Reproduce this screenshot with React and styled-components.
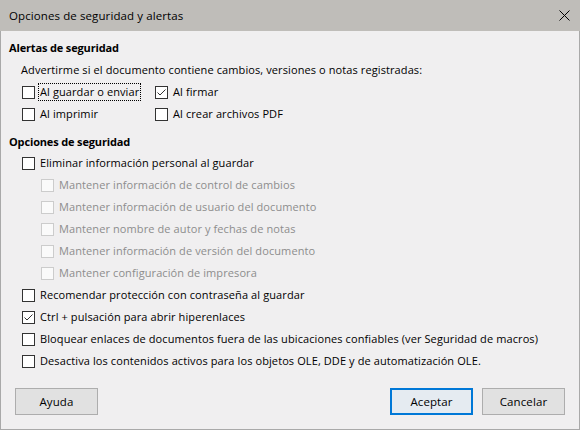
import React from 'react';
import styled, { createGlobalStyle } from 'styled-components';

const Global = createGlobalStyle`
  html, body { margin: 0; padding: 0; background: #f0eff0; }
  body {
    font-family: "Open Sans", "Noto Sans", sans-serif;
    font-size: 11px;
    letter-spacing: 0.1px;
    color: #000;
  }
`;

const Window = styled.div`
  width: 580px;
  height: 430px;
  display: flex;
  flex-direction: column;
  background: #f0eff0;
`;

const TitleBar = styled.div`
  height: 31px;
  flex: none;
  background: #bfbdb9;
  display: flex;
  align-items: center;
  justify-content: space-between;
  padding: 0 9px;
  font-size: 11.5px;
`;

const CloseButton = styled.div`
  width: 30px;
  height: 31px;
  display: flex;
  align-items: center;
  justify-content: center;
  margin-right: -8px;
`;

const Content = styled.div`
  flex: 1;
  display: flex;
  flex-direction: column;
  border: 1px solid #a9a9a9;
  border-top: none;
  padding: 6px 0 0 8px;
`;

const Heading = styled.div`
  height: ${p => p.$h || 22}px;
  line-height: 22px;
  font-weight: 700;
  letter-spacing: -0.15px;
  margin-top: ${p => p.$gap || 0}px;
`;

const Text = styled.div`
  height: 22px;
  line-height: 22px;
  padding-left: 12px;
`;

const Grid = styled.div`
  display: grid;
  grid-template-columns: 133px auto;
  padding-left: 13px;
`;

const Row = styled.div`
  height: 22px;
  display: flex;
  align-items: center;
  gap: 4px;
  padding-left: ${p => p.$indent || 0}px;
  color: ${p => (p.$disabled ? '#8d8d8d' : '#000')};
`;

const List = styled.div`
  padding-left: 13px;
`;

const Box = styled.span`
  width: 13px;
  height: 13px;
  box-sizing: border-box;
  flex: none;
  border: 1px solid ${p => (p.$disabled ? '#cccccc' : '#333333')};
  background: ${p => (p.$disabled ? '#fafafa' : '#ffffff')};
  display: flex;
  align-items: center;
  justify-content: center;
`;

const Label = styled.span`
  line-height: 16px;
  padding: 0 1px;
  outline: ${p => (p.$focus ? '1px dotted #000' : 'none')};
  outline-offset: 0;
`;

const Footer = styled.div`
  margin-top: auto;
  display: flex;
  gap: 9px;
  padding: 0 14px 14px 6px;
`;

const Spacer = styled.div`
  flex: 1;
`;

const Button = styled.div`
  width: 83px;
  height: 27px;
  box-sizing: border-box;
  display: flex;
  align-items: center;
  justify-content: center;
  background: ${p => (p.$default ? '#e5ebf1' : '#e1e1e1')};
  border: ${p => (p.$default ? '2px solid #0078d7' : '1px solid #adadad')};
  font-size: 11.5px;
`;

const Check = ({ checked, disabled }) => (
  <Box $disabled={disabled}>
    {checked && (
      <svg width="11" height="11" viewBox="0 0 11 11">
        <path d="M1.5 5.5 L4 8 L9.5 2.5" fill="none" stroke="#333" strokeWidth="1" />
      </svg>
    )}
  </Box>
);

const Option = ({ label, checked, disabled, indent, focus }) => (
  <Row $disabled={disabled} $indent={indent}>
    <Check checked={checked} disabled={disabled} />
    <Label $focus={focus}>{label}</Label>
  </Row>
);

export default function App() {
  const sub = [
    'Mantener información de control de cambios',
    'Mantener información de usuario del documento',
    'Mantener nombre de autor y fechas de notas',
    'Mantener información de versión del documento',
    'Mantener configuración de impresora',
  ];
  return (
    <>
      <Global />
      <Window>
        <TitleBar>
          <span>Opciones de seguridad y alertas</span>
          <CloseButton>
            <svg width="11" height="11" viewBox="0 0 11 11">
              <path d="M0.5 0.5 L10.5 10.5 M10.5 0.5 L0.5 10.5" stroke="#000" strokeWidth="1" />
            </svg>
          </CloseButton>
        </TitleBar>
        <Content>
          <Heading>Alertas de seguridad</Heading>
          <Text>Advertirme si el documento contiene cambios, versiones o notas registradas:</Text>
          <Grid>
            <Option label="Al guardar o enviar" focus />
            <Option label="Al firmar" checked />
            <Option label="Al imprimir" />
            <Option label="Al crear archivos PDF" />
          </Grid>
          <Heading $gap={6} $h={21}>Opciones de seguridad</Heading>
          <List>
            <Option label="Eliminar información personal al guardar" />
            {sub.map(s => (
              <Option key={s} label={s} disabled indent={19} />
            ))}
            <Option label="Recomendar protección con contraseña al guardar" />
            <Option label="Ctrl + pulsación para abrir hiperenlaces" checked />
            <Option label="Bloquear enlaces de documentos fuera de las ubicaciones confiables (ver Seguridad de macros)" />
            <Option label="Desactiva los contenidos activos para los objetos OLE, DDE y de automatización OLE." />
          </List>
          <Footer>
            <Button>Ayuda</Button>
            <Spacer />
            <Button $default>Aceptar</Button>
            <Button>Cancelar</Button>
          </Footer>
        </Content>
      </Window>
    </>
  );
}
